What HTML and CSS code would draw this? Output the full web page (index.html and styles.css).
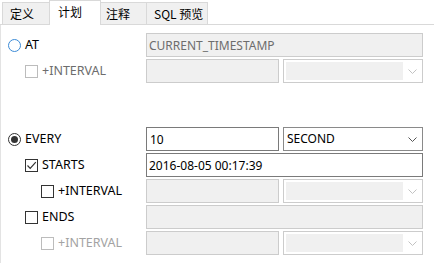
FILE: index.html
```html
<!DOCTYPE html>
<html lang="zh-CN">
<head>
  <meta charset="UTF-8">
  <title>计划</title>
  <link rel="stylesheet" href="styles.css">
</head>
<body>
  <div class="tabs">
    <div class="tab tab-def">定义</div>
    <div class="tab tab-plan active">计划</div>
    <div class="tab tab-note">注释</div>
    <div class="tab tab-sql">SQL 预览</div>
  </div>

  <div class="panel">
    <div class="row">
      <label class="opt lvl0"><span class="radio focus"></span>AT</label>
      <div class="fields">
        <input class="field wide" type="text" value="CURRENT_TIMESTAMP" disabled>
      </div>
    </div>
    <div class="row">
      <label class="opt lvl1 off"><span class="check"></span>+INTERVAL</label>
      <div class="fields">
        <input class="field half" type="text" disabled>
        <div class="combo"><span class="combo-fill"></span><svg class="chev" width="9" height="5" viewBox="0 0 9 5"><polyline points="0.5,0.5 4.5,4.5 8.5,0.5"/></svg></div>
      </div>
    </div>

    <div class="spacer"></div>

    <div class="row">
      <label class="opt lvl0"><span class="radio on"></span>EVERY</label>
      <div class="fields">
        <input class="field half" type="text" value="10">
        <div class="combo enabled"><span class="combo-text">SECOND</span><svg class="chev" width="9" height="5" viewBox="0 0 9 5"><polyline points="0.5,0.5 4.5,4.5 8.5,0.5"/></svg></div>
      </div>
    </div>
    <div class="row">
      <label class="opt lvl1"><span class="check on"><svg width="11" height="11" viewBox="0 0 11 11"><polyline points="1.5,5.5 4.2,8.3 9.8,2.2"/></svg></span>STARTS</label>
      <div class="fields">
        <input class="field wide" type="text" value="2016-08-05 00:17:39">
      </div>
    </div>
    <div class="row">
      <label class="opt lvl2"><span class="check"></span>+INTERVAL</label>
      <div class="fields">
        <input class="field half" type="text" disabled>
        <div class="combo"><span class="combo-fill"></span><svg class="chev" width="9" height="5" viewBox="0 0 9 5"><polyline points="0.5,0.5 4.5,4.5 8.5,0.5"/></svg></div>
      </div>
    </div>
    <div class="row">
      <label class="opt lvl1"><span class="check"></span>ENDS</label>
      <div class="fields">
        <input class="field wide" type="text" disabled>
      </div>
    </div>
    <div class="row">
      <label class="opt lvl2 off light"><span class="check"></span>+INTERVAL</label>
      <div class="fields">
        <input class="field half" type="text" disabled>
        <div class="combo"><span class="combo-fill"></span><svg class="chev" width="9" height="5" viewBox="0 0 9 5"><polyline points="0.5,0.5 4.5,4.5 8.5,0.5"/></svg></div>
      </div>
    </div>
  </div>
</body>
</html>
```

FILE: styles.css
```css
body {
  margin: 0;
  padding: 0;
  background-color: #ffffff;
  font-family: "Noto Sans", "Noto Sans CJK SC", sans-serif;
  font-size: 12px;
  color: #000;
  width: 434px;
  height: 263px;
  overflow: hidden;
}

/* tab strip */
.tabs {
  display: flex;
  align-items: flex-end;
  height: 24px;
  padding-left: 2px;
  border-bottom: 1px solid #d9d9d9;
  background-color: #ffffff;
}

.tab {
  box-sizing: border-box;
  height: 22px;
  padding: 3px 0 0 7px;
  margin-right: -1px;
  background-color: #f0f0f0;
  border: 1px solid #d9d9d9;
  border-bottom: none;
  line-height: 15px;
  font-family: "Noto Sans CJK SC", "Noto Sans", sans-serif;
  font-size: 12px;
  color: #000;
  white-space: nowrap;
}

.tab-def { width: 48px; }
.tab-plan { width: 52px; }
.tab-note { width: 47px; padding-left: 5px; }
.tab-sql { width: 62px; }

.tab.active {
  position: relative;
  height: 25px;
  margin-bottom: -1px;
  padding-top: 3px;
  padding-left: 8px;
  background-color: #ffffff;
  z-index: 1;
}

/* content */
.panel {
  border-left: 1px solid #e3e3e3;
  height: 238px;
  padding-top: 8px;
  box-sizing: border-box;
}

.row {
  display: flex;
  align-items: center;
  height: 24px;
  margin-bottom: 2px;
}

.spacer {
  height: 42px;
}

.opt {
  display: flex;
  align-items: center;
  width: 145px;
  box-sizing: border-box;
  white-space: nowrap;
  font-size: 12.5px;
  line-height: 16px;
}

.lvl0 { padding-left: 7px; }
.lvl1 { padding-left: 24px; }
.lvl2 { padding-left: 40px; }

.opt.off { color: #6d6d6d; }
.opt.light { color: #a3a3a3; }

.radio {
  box-sizing: border-box;
  width: 13px;
  height: 13px;
  margin-right: 4px;
  border: 1px solid #333;
  border-radius: 50%;
  display: flex;
  align-items: center;
  justify-content: center;
  background: #fff;
}

.radio.focus {
  border-color: #3c8bd6;
  border-width: 1.5px;
}

.radio.on::after {
  content: "";
  width: 7px;
  height: 7px;
  border-radius: 50%;
  background-color: #333;
}

.check {
  box-sizing: border-box;
  width: 13px;
  height: 13px;
  margin-right: 4px;
  border: 1px solid #333;
  background: #fff;
  display: flex;
  align-items: center;
  justify-content: center;
}

.off .check {
  border-color: #bcbcbc;
}

.check svg polyline {
  fill: none;
  stroke: #333;
  stroke-width: 1.2;
}

.fields {
  display: flex;
  gap: 4px;
  width: 277px;
}

.field {
  box-sizing: border-box;
  height: 24px;
  margin: 0;
  padding: 0 3px;
  border: 1px solid #7a7a7a;
  background-color: #fff;
  font-family: "Noto Sans", sans-serif;
  font-size: 12px;
  color: #000;
  outline: none;
}

.field:disabled {
  border-color: #cccccc;
  background-color: #f0f0f0;
  color: #6d6d6d;
}

.field.wide { width: 277px; padding-left: 2px; }
.field.half { width: 133px; }

.combo {
  position: relative;
  box-sizing: border-box;
  width: 140px;
  height: 24px;
  border: 1px solid #cccccc;
  background-color: #fff;
  display: flex;
  align-items: center;
}

.combo-fill {
  position: absolute;
  left: 2px;
  top: 2px;
  bottom: 2px;
  right: 19px;
  background-color: #f0f0f0;
}

.combo.enabled {
  border-color: #8a8a8a;
}

.combo-text {
  padding-left: 3px;
  line-height: 16px;
}

.chev {
  position: absolute;
  right: 5px;
  top: 9px;
}

.chev polyline {
  fill: none;
  stroke: #c2c2c2;
  stroke-width: 1;
}

.combo.enabled .chev polyline {
  stroke: #555;
}
```
